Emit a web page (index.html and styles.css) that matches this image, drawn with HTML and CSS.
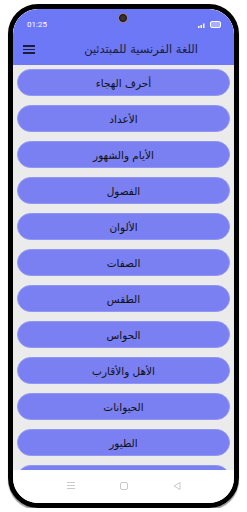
FILE: index.html
```html
<!doctype html>
<html lang="ar">

<head>
    <title>اللغة الفرنسية للمبتدئين</title>
    <link rel="stylesheet" href="styles.css">
</head>

<body>
    <div class="phone">
        <div class="screen">
            <header class="appbar">
                <div class="status">
                    <span class="time">01:25</span>
                    <span class="camera"></span>
                    <span class="status-icons">
                        <svg width="9" height="6" viewBox="0 0 9 6">
                            <rect x="0" y="4" width="1.5" height="2" fill="#fff" />
                            <rect x="2.5" y="3" width="1.5" height="3" fill="#fff" />
                            <rect x="5" y="1.5" width="1.5" height="4.5" fill="#fff" />
                        </svg>
                        <span class="battery"></span>
                    </span>
                </div>
                <div class="toolbar">
                    <span class="menu"><i></i><i></i><i></i></span>
                    <h1 class="title">اللغة الفرنسية للمبتدئين</h1>
                </div>
            </header>

            <main class="list">
                <a class="item">أحرف الهجاء</a>
                <a class="item">الأعداد</a>
                <a class="item">الأيام والشهور</a>
                <a class="item">الفصول</a>
                <a class="item">الألوان</a>
                <a class="item">الصفات</a>
                <a class="item">الطقس</a>
                <a class="item">الحواس</a>
                <a class="item">الأهل والأقارب</a>
                <a class="item">الحيوانات</a>
                <a class="item">الطيور</a>
                <a class="item"></a>
            </main>

            <nav class="navbar">
                <svg width="10" height="9" viewBox="0 0 10 9">
                    <path d="M1 1.5H9M1 4.5H9M1 7.5H9" stroke="#bbb" stroke-width="0.8" />
                </svg>
                <svg width="10" height="10" viewBox="0 0 10 10">
                    <rect x="1.5" y="1.5" width="7" height="7" rx="1.5" fill="none" stroke="#bbb" stroke-width="0.8" />
                </svg>
                <svg width="10" height="10" viewBox="0 0 10 10">
                    <path d="M8 1.5V8.5L2 5Z" fill="none" stroke="#bbb" stroke-width="0.8" stroke-linejoin="round" />
                </svg>
            </nav>
        </div>
    </div>
</body>

</html>
```

FILE: styles.css
```css
body {
    margin: 0;
    background-color: #fff;
    font-family: "DejaVu Sans", "Noto Sans", sans-serif;
}

.phone {
    width: 221px;
    height: 494px;
    margin: 4px 0 0 8px;
    border: 5px solid #000;
    border-radius: 30px;
    box-shadow: 0 2px 1px #999;
    overflow: hidden;
}

.screen {
    height: 100%;
    display: flex;
    flex-direction: column;
    background-color: #ebebeb;
    border-radius: 25px;
    overflow: hidden;
}

.appbar {
    height: 56px;
    flex-shrink: 0;
    background-color: #6c78f6;
}

.status {
    height: 25px;
    display: flex;
    align-items: center;
    justify-content: space-between;
    padding: 0 13px 0 14px;
    position: relative;
}

.time {
    color: #fff;
    font-family: "Roboto", sans-serif;
    font-size: 8px;
    margin-top: 6px;
}

.camera {
    position: absolute;
    left: 106px;
    top: 5px;
    width: 6px;
    height: 6px;
    border-radius: 50%;
    background-color: #333;
    border: 1.5px solid #111;
    box-shadow: 0 0 0 0.5px #c77a3c;
}

.status-icons {
    display: flex;
    align-items: flex-end;
    gap: 3px;
    margin-top: 6px;
}

.battery {
    width: 9px;
    height: 5px;
    border: 1px solid #fff;
    border-radius: 2px;
    background-color: #a9b0fa;
}

.toolbar {
    height: 31px;
    display: flex;
    align-items: center;
    padding: 0 36px 0 10px;
}

.menu {
    display: flex;
    flex-direction: column;
    gap: 2px;
    width: 12px;
}

.menu i {
    display: block;
    height: 1.5px;
    background-color: #1b1d3a;
}

.title {
    margin: 0 0 0 auto;
    font-size: 11.5px;
    font-weight: normal;
    color: #1b1d3a;
    padding-bottom: 2px;
}

.list {
    flex: 1;
    overflow: hidden;
    display: flex;
    flex-direction: column;
    gap: 9px;
    padding: 4px 4px 0;
}

.item {
    flex-shrink: 0;
    height: 25px;
    display: flex;
    align-items: center;
    justify-content: center;
    background-color: #7a80f2;
    border: 1px solid #9196f4;
    border-radius: 14px;
    color: #111;
    font-size: 10.5px;
}

.navbar {
    height: 31px;
    flex-shrink: 0;
    background-color: #fff;
    display: flex;
    align-items: center;
    justify-content: center;
    gap: 43px;
    padding-bottom: 2px;
}
```
